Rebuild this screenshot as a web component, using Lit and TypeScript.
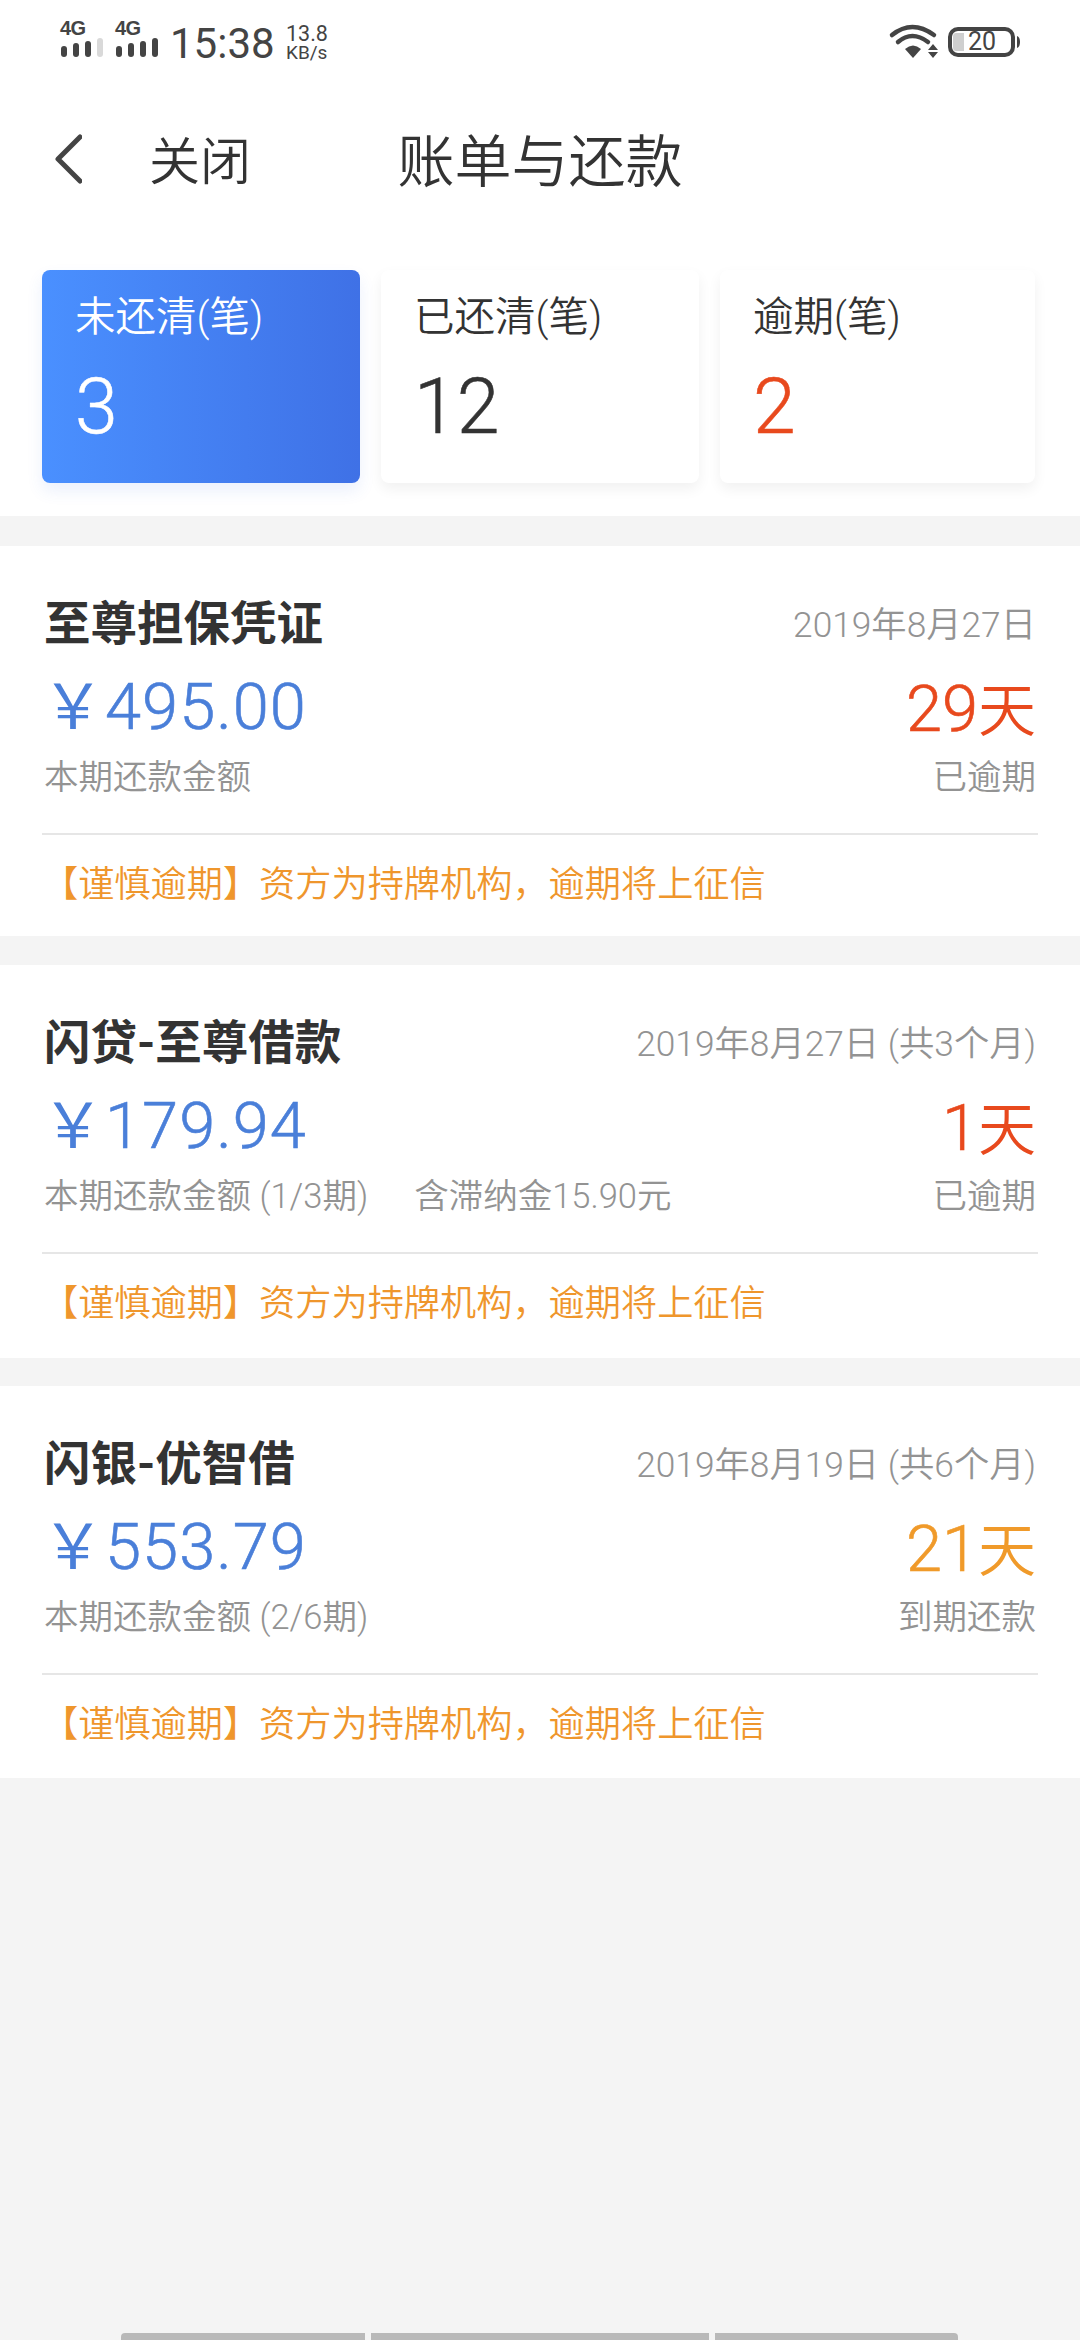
import { LitElement, html, css, svg } from "lit";
import { customElement } from "lit/decorators.js";

interface Bill {
  name: string; date: string; amount: string; sub: string; extra?: string;
  days: string; status: string; tone: "red" | "orange"; cls: string;
}

const bills: Bill[] = [
  { name: "至尊担保凭证", date: "2019年8月27日", amount: "495.00", sub: "本期还款金额", days: "29", status: "已逾期", tone: "red", cls: "first" },
  { name: "闪贷-至尊借款", date: "2019年8月27日 (共3个月)", amount: "179.94", sub: "本期还款金额 (1/3期)", extra: "含滞纳金15.90元", days: "1", status: "已逾期", tone: "red", cls: "second" },
  { name: "闪银-优智借", date: "2019年8月19日 (共6个月)", amount: "553.79", sub: "本期还款金额 (2/6期)", days: "21", status: "到期还款", tone: "orange", cls: "third" },
];

const signal = (x: number, levels: string[]) => svg`
  ${levels.map((c, i) => {
    const h = [11, 14, 16, 19][i];
    return svg`<rect x=${x + i * 12} y=${57 - h} width="6" height=${h} rx="3" fill=${c}></rect>`;
  })}`;

@customElement("app-root")
export class AppRoot extends LitElement {
  static styles = css`
    :host { display: block; width: 1080px; height: 2340px; background: #f4f4f4; overflow: hidden; position: relative;
      font-family: Roboto, "Noto Sans CJK SC", sans-serif; color: #333; }
    .top { background: #fff; padding-bottom: 33px; }
    .status { height: 90px; display: flex; align-items: flex-start; position: relative; }
    .status svg { display: block; }
    .sig { position: absolute; left: 0; top: 0; }
    .g4 { position: absolute; top: 18px; font: 700 20px/20px "Liberation Sans", sans-serif; color: #444; letter-spacing: -0.5px; }
    .time { position: absolute; left: 170px; top: 20px; font-size: 42px; line-height: 48px; color: #444; }
    .speed { position: absolute; left: 286px; top: 24px; font-size: 21.5px; line-height: 19px; color: #444; }
    .speed div:last-child { font-size: 19px; }
    .right { position: absolute; left: 880px; top: 15px; }
    .batt { position: absolute; left: 968px; top: 28px; font-size: 25px; line-height: 28px; color: #444; }
    .nav { height: 140px; display: grid; grid-template-columns: 1fr auto 1fr; align-items: center; }
    .navl { display: flex; align-items: center; padding-left: 55px; gap: 67px; }
    .navl svg { margin-bottom: 2px; }
    .close { font-size: 51px; line-height: 60px; color: #333; font-weight: 350; padding-top: 6px; }
    .title { font-size: 57px; line-height: 70px; color: #333; font-weight: 350; padding-top: 6px; }
    .cards { display: flex; padding: 40px 44px 0 42px; gap: 21px; }
    .card { width: 315px; height: 213px; border-radius: 8px; box-sizing: border-box; padding: 24px 0 0 33px;
      background: #fff; box-shadow: 0 6px 14px rgba(0,0,0,0.06); }
    .card.active { width: 318px; background: linear-gradient(90deg, #4a90ff, #3f71e6); color: #fff; box-shadow: 0 8px 16px rgba(60,110,230,0.10); }
    .card.b { width: 318px; }
    .label { font-size: 40.5px; line-height: 46px; font-weight: 350; }
    .num { font-size: 77px; line-height: 90px; margin-top: 22px; font-weight: 300; -webkit-text-stroke: 0.5px currentColor; }
    .num.red { color: #e8491d; }
    .bill { background: #fff; padding: 0 42px; box-sizing: border-box; }
    .bill.first { margin-top: 30px; height: 390px; }
    .bill.second { margin-top: 29px; height: 393px; }
    .bill.third { margin-top: 28px; height: 392px; }
    .main { height: 289px; box-sizing: border-box; border-bottom: 2px solid #e6e6e6; padding: 48px 2px 0 2px; }
    .row { display: flex; justify-content: space-between; align-items: center; }
    .r1 { height: 60px; }
    .r2 { height: 90px; margin-top: 8px; }
    .r3 { height: 50px; margin-top: -3px; }
    .name { font-size: 46.5px; font-weight: 700; color: #333; line-height: 60px; }
    .date { font-size: 35.3px; color: #939393; font-weight: 350; margin-bottom: 6px; }
    .amt { font-size: 65px; color: #4a7fd9; line-height: 90px; display: flex; align-items: center; font-weight: 300;
      letter-spacing: 1px; -webkit-text-stroke: 0.6px currentColor; }
    .yen { font-size: 62px; line-height: 90px; font-family: "Noto Sans CJK SC", sans-serif; font-weight: 400; letter-spacing: 0;
      margin: 0 1px 10px -2px; -webkit-text-stroke: 0; }
    .days { font-size: 65px; line-height: 90px; font-weight: 300; -webkit-text-stroke: 0.6px currentColor; }
    .days span { font-size: 58px; font-family: "Noto Sans CJK SC", sans-serif; font-weight: 350; -webkit-text-stroke: 0; }
    .red2 { color: #e8491d; }
    .orange2 { color: #f09a2a; }
    .sub { font-size: 34.5px; color: #939393; font-weight: 350; display: flex; gap: 46px; }
    .notice { font-size: 36.2px; line-height: 100px; color: #ef962c; font-weight: 350; white-space: nowrap; }
    .home { position: absolute; left: 121px; top: 2333px; height: 7px; display: flex; gap: 6px; }
    .home i { display: block; height: 7px; background: #b9b9b9; }
    .home i:first-child { width: 244px; border-radius: 4px 0 0 0; }
    .home i:nth-child(2) { width: 338px; }
    .home i:last-child { width: 243px; border-radius: 0 4px 0 0; }
  `;

  render() {
    return html`
      <div class="top">
        <div class="status">
          <svg class="sig" width="170" height="70">
            ${signal(61, ["#444", "#444", "#444", "#d9d9d9"])}
            ${signal(116, ["#444", "#444", "#444", "#444"])}
          </svg>
          <span class="g4" style="left:60px">4G</span>
          <span class="g4" style="left:115px">4G</span>
          <span class="time">15:38</span>
          <div class="speed"><div>13.8</div><div>KB/s</div></div>
          <svg class="right" width="145" height="50" viewBox="880 15 145 50">
            <path d="M892 35 Q912 19 934 35" fill="none" stroke="#444" stroke-width="4.5" stroke-linecap="round"/>
            <path d="M898 42 Q912 30 928 42" fill="none" stroke="#444" stroke-width="4.5" stroke-linecap="round"/>
            <path d="M905 49 Q913 42 921 49 L913 58 Z" fill="#444"/>
            <path d="M933 44 L938 50 H928 Z M928 52 H938 L933 58 Z" fill="#444"/>
            <rect x="950" y="29" width="63" height="26" rx="8" fill="none" stroke="#444" stroke-width="4"/>
            <path d="M956 33 H964 V51 H956 Q953 51 953 47 V37 Q953 33 956 33 Z" fill="#cfcfcf"/>
            <path d="M1017 36 Q1020 37 1020 42 Q1020 47 1017 48 Z" fill="#444"/>
          </svg>
          <span class="batt">20</span>
        </div>
        <div class="nav">
          <div class="navl">
            <svg width="27" height="50" viewBox="0 0 27 50">
              <path d="M25 3 L3 25 L25 47" fill="none" stroke="#444" stroke-width="5" stroke-linecap="round" stroke-linejoin="round"/>
            </svg>
            <span class="close">关闭</span>
          </div>
          <span class="title">账单与还款</span>
          <span></span>
        </div>
        <div class="cards">
          <div class="card active"><div class="label">未还清(笔)</div><div class="num">3</div></div>
          <div class="card b"><div class="label">已还清(笔)</div><div class="num">12</div></div>
          <div class="card"><div class="label">逾期(笔)</div><div class="num red">2</div></div>
        </div>
      </div>
      ${bills.map(b => html`
        <div class="bill ${b.cls}">
          <div class="main">
            <div class="row r1"><span class="name">${b.name}</span><span class="date">${b.date}</span></div>
            <div class="row r2">
              <span class="amt"><span class="yen">￥</span>${b.amount}</span>
              <span class="days ${b.tone === "red" ? "red2" : "orange2"}">${b.days}<span>天</span></span>
            </div>
            <div class="row r3">
              <span class="sub"><span>${b.sub}</span>${b.extra ? html`<span>${b.extra}</span>` : ""}</span>
              <span class="sub">${b.status}</span>
            </div>
          </div>
          <div class="notice">【谨慎逾期】资方为持牌机构，逾期将上征信</div>
        </div>
      `)}
      <div class="home"><i></i><i></i><i></i></div>
    `;
  }
}
